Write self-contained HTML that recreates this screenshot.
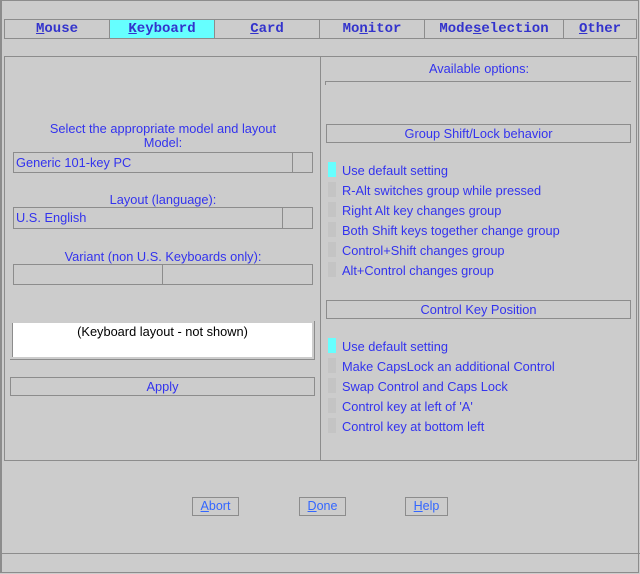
<!DOCTYPE html>
<html><head><style>
body{margin:0;width:640px;height:574px;background:#cccccc;position:relative;overflow:hidden;font-family:"Liberation Sans",sans-serif;font-size:12.8px;color:#3333ee}
div{position:absolute;box-sizing:border-box}
.b{border:1px solid #8c8c8c}
.tab{top:19px;height:20px;border:1px solid #8c8c8c;text-align:center;font-family:"Liberation Mono",monospace;font-weight:bold;font-size:14px;line-height:18px;color:#3333cc}
.c{text-align:center}
.ind{width:8px;height:15px;background:#c4c4c4;left:328px}
.it{left:342px}
.btn{border:1px solid #8c8c8c;height:19px;top:497px;color:#3366ff;line-height:17px;text-align:center;font-size:12.5px}
u{text-decoration:underline}
</style></head><body>
<div style="left:0;top:0;width:639px;height:573px;border:1px solid #8c8c8c;border-left-width:2px"></div>
<div class="tab" style="left:4px;width:106px"><u>M</u>ouse</div>
<div class="tab" style="left:109px;width:106px;background:#66ffff"><u>K</u>eyboard</div>
<div class="tab" style="left:214px;width:106px"><u>C</u>ard</div>
<div class="tab" style="left:319px;width:106px">Mo<u>n</u>itor</div>
<div class="tab" style="left:424px;width:140px">Mode<u>s</u>election</div>
<div class="tab" style="left:563px;width:74px"><u>O</u>ther</div>
<div class="b" style="left:4px;top:56px;width:633px;height:405px"></div>
<div style="left:320px;top:56px;width:1px;height:405px;background:#8c8c8c"></div>
<div class="c" style="left:13px;width:300px;top:122px;line-height:14px">Select the appropriate model and layout<br>Model:</div>
<div class="b" style="left:13px;top:152px;width:300px;height:21px;line-height:19px;padding-left:2px">Generic 101-key PC</div>
<div style="left:292px;top:152px;width:1px;height:21px;background:#8c8c8c"></div>
<div class="c" style="left:13px;width:300px;top:192px">Layout (language):</div>
<div class="b" style="left:13px;top:207px;width:300px;height:22px;line-height:19px;padding-left:2px">U.S. English</div>
<div style="left:282px;top:207px;width:1px;height:22px;background:#8c8c8c"></div>
<div class="c" style="left:13px;width:300px;top:249px">Variant (non U.S. Keyboards only):</div>
<div class="b" style="left:13px;top:264px;width:300px;height:21px"></div>
<div style="left:162px;top:264px;width:1px;height:21px;background:#8c8c8c"></div>
<div style="left:10px;top:321px;width:305px;height:39px;border-right:1px solid #8c8c8c;border-bottom:1px solid #8c8c8c"></div>
<div class="c" style="left:12px;top:323px;width:300px;height:34px;background:#fff;color:#000;padding-top:1px;border-left:1px solid #8c8c8c">(Keyboard layout - not shown)</div>
<div class="b c" style="left:10px;top:377px;width:305px;height:19px;line-height:17px">Apply</div>
<div class="c" style="left:322px;width:314px;top:61px">Available options:</div>
<div style="left:325px;top:81px;width:306px;height:1px;background:#8c8c8c"></div>
<div style="left:325px;top:81px;width:1px;height:4px;background:#8c8c8c"></div>
<div class="b c" style="left:326px;top:124px;width:305px;height:19px;line-height:17px">Group Shift/Lock behavior</div>
<div class="ind" style="top:162px;background:#66ffff"></div><div class="it" style="top:163px">Use default setting</div>
<div class="ind" style="top:182px"></div><div class="it" style="top:183px">R-Alt switches group while pressed</div>
<div class="ind" style="top:202px"></div><div class="it" style="top:203px">Right Alt key changes group</div>
<div class="ind" style="top:222px"></div><div class="it" style="top:223px">Both Shift keys together change group</div>
<div class="ind" style="top:242px"></div><div class="it" style="top:243px">Control+Shift changes group</div>
<div class="ind" style="top:262px"></div><div class="it" style="top:263px">Alt+Control changes group</div>
<div class="b c" style="left:326px;top:300px;width:305px;height:19px;line-height:17px">Control Key Position</div>
<div class="ind" style="top:338px;background:#66ffff"></div><div class="it" style="top:339px">Use default setting</div>
<div class="ind" style="top:358px"></div><div class="it" style="top:359px">Make CapsLock an additional Control</div>
<div class="ind" style="top:378px"></div><div class="it" style="top:379px">Swap Control and Caps Lock</div>
<div class="ind" style="top:398px"></div><div class="it" style="top:399px">Control key at left of 'A'</div>
<div class="ind" style="top:418px"></div><div class="it" style="top:419px">Control key at bottom left</div>
<div class="btn" style="left:192px;width:47px"><u>A</u>bort</div>
<div class="btn" style="left:299px;width:47px"><u>D</u>one</div>
<div class="btn" style="left:405px;width:43px"><u>H</u>elp</div>
<div style="left:0;top:553px;width:640px;height:1px;background:#8c8c8c"></div>
</body></html>
